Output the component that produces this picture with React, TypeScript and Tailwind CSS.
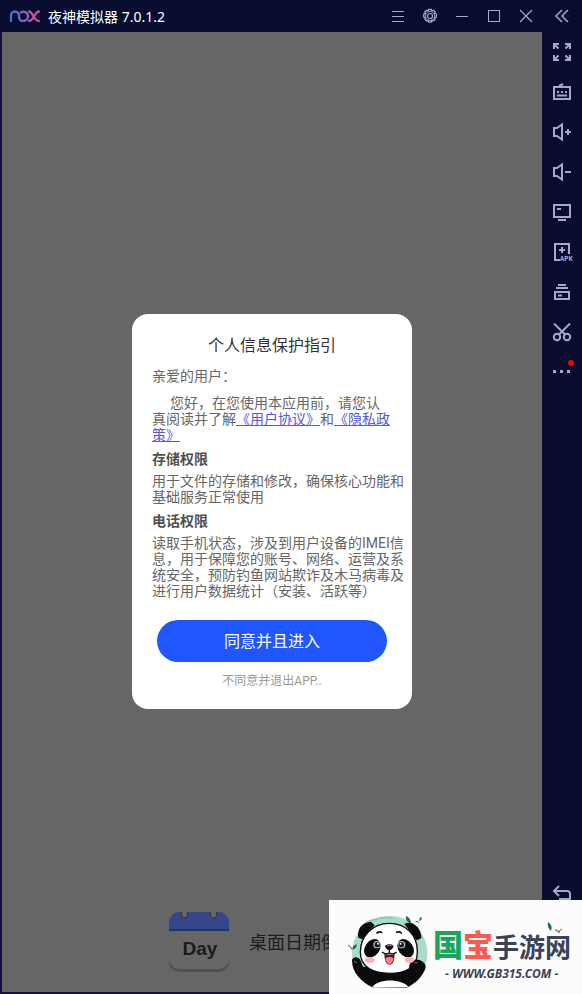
import React from 'react'

type IconProps = {
  children: React.ReactNode
}

const SideIcon = ({ children }: IconProps) => (
  <svg className="h-6 w-6" viewBox="0 0 24 24" fill="none" stroke="currentColor" strokeWidth={2}>
    {children}
  </svg>
)

const TitleIcon = ({ children }: IconProps) => (
  <svg className="h-4 w-4" viewBox="0 0 16 16" fill="none" stroke="currentColor" strokeWidth={1}>
    {children}
  </svg>
)

const titleButtons = [
  { label: '菜单', icon: <path d="M2 3.5h12M2 8.5h12M2 13.5h12" /> },
  {
    label: '设置',
    icon: (
      <>
        <circle cx="8" cy="8" r="2.5" strokeWidth={1.2} />
        <path
          d="M6.700 1.300h2.600l.5 1.700 1.600-.8 1.800 1.800-.8 1.600 1.900.6v2.800l-1.900.6.8 1.600-1.800 1.800-1.600-.8-.5 1.900H6.700l-.5-1.900-1.600.8-1.800-1.800.8-1.600-1.900-.6V6.200l1.900-.6-.8-1.600 1.800-1.800 1.600.8z"
          strokeWidth={1.3}
        />
        <circle cx="8" cy="8" r="4.600" strokeWidth={0.8} />
      </>
    ),
  },
  { label: '最小化', icon: <path d="M2 8.5h12" /> },
  { label: '最大化', icon: <rect x="2.5" y="2.5" width="11" height="11" /> },
  { label: '关闭', icon: <path d="M2 2l12 12M14 2L2 14" strokeWidth={1.2} /> },
]

const sideButtons = [
  {
    label: '全屏',
    icon: <path d="M4 9V4h5M4 4l4.500 4.500M15 4h5v5M20 4l-4.500 4.500M4 15v5h5M4 20l4.500-4.500M20 15v5h-5M20 20l-4.500-4.500" />,
  },
  {
    label: '键盘控制',
    icon: (
      <>
        <rect x="4" y="7" width="16" height="12" />
        <path d="M9 6l4-2M7 12h2M11 12h2M15 12h2M7 15.500h10" />
      </>
    ),
  },
  {
    label: '音量加',
    icon: <path d="M12 4.5v15L7 16H4V8h3zM15 12h6M18 9v6" />,
  },
  {
    label: '音量减',
    icon: <path d="M12 4.5v15L7 16H4V8h3zM15 12h6" />,
  },
  {
    label: '虚拟屏幕',
    icon: (
      <>
        <rect x="4" y="5" width="16" height="12" />
        <path d="M7 9h4M8 20h8" />
      </>
    ),
  },
  {
    label: '安装应用',
    icon: (
      <>
        <path d="M10 20H5V4h14v10M9 10h6M12 7v6" />
        <text x="10" y="21" fontSize="7" fontWeight="700" fontFamily="Liberation Mono, monospace" fill="currentColor" stroke="none">
          APK
        </text>
      </>
    ),
  },
  {
    label: '多开器',
    icon: (
      <>
        <rect x="5" y="12" width="14" height="7" />
        <path d="M6 8h12M8 5h8M8 15.5h4" />
      </>
    ),
  },
  {
    label: '截图',
    icon: (
      <>
        <path d="M4 3.5l11 11M20 3.5l-11 11" />
        <circle cx="7" cy="17" r="3.2" />
        <circle cx="17" cy="17" r="3.2" />
      </>
    ),
  },
  {
    label: '更多',
    icon: (
      <>
        <path d="M3 11.5h3M10 11.5h3M17 11.5h3" strokeWidth={3} />
        <circle cx="21" cy="3" r="3" fill="#f5000f" stroke="none" />
      </>
    ),
  },
]

const NoxLogo = () => (
  <svg className="h-3 w-8" viewBox="0 0 32 12" fill="none" strokeWidth={2.3} strokeLinecap="round">
    <defs>
      <linearGradient id="nox" gradientUnits="userSpaceOnUse" x1="2" y1="0" x2="32" y2="0">
        <stop offset="0" stopColor="#3f74dc" />
        <stop offset="0.5" stopColor="#8f62c8" />
        <stop offset="1" stopColor="#e8468f" />
      </linearGradient>
    </defs>
    <path d="M3 11V5.500a4 4 0 0 1 8 0V7a4 4 0 0 0 4.500 4A4.700 4.700 0 0 0 20 6.300a4.500 4.500 0 0 0-7-3.800" stroke="url(#nox)" />
    <path d="M21 1.500c4 0 4.500 9.500 10 9.500M31 1.500C26.500 1.500 26 11 21 11" stroke="url(#nox)" />
  </svg>
)

const TitleBar = () => (
  <header className="flex h-8 items-center text-[#a3a9cc]">
    <div className="flex flex-1 items-center gap-2 pl-2">
      <NoxLogo />
      <h1 className="whitespace-nowrap pt-0.5 font-['Noto_Sans','Noto_Sans_CJK_SC',sans-serif] text-sm text-white">
        夜神模拟器 7.0.1.2
      </h1>
    </div>
    {titleButtons.map((button) => (
      <button key={button.label} type="button" aria-label={button.label} className="flex h-8 w-8 items-center justify-center hover:text-white">
        <TitleIcon>{button.icon}</TitleIcon>
      </button>
    ))}
    <button type="button" aria-label="收起侧边栏" className="flex h-8 w-10 items-center justify-center hover:text-white">
      <svg className="h-4 w-4" viewBox="0 0 16 16" fill="none" stroke="currentColor" strokeWidth={1.5}>
        <path d="M8 2L2 8l6 6M14 2L8 8l6 6" />
      </svg>
    </button>
  </header>
)

const SideBar = () => (
  <aside className="flex w-10 shrink-0 flex-col items-center justify-between pb-20 text-[#a3a9cc]">
    <div className="flex flex-col">
      {sideButtons.map((button) => (
        <button key={button.label} type="button" aria-label={button.label} className="flex h-10 w-10 items-center justify-center hover:text-white">
          <SideIcon>{button.icon}</SideIcon>
        </button>
      ))}
    </div>
    <button type="button" aria-label="返回" className="flex h-10 w-10 items-center justify-center hover:text-white">
      <SideIcon>
        <path d="M9 4L4 9l5 5M4 9h13a3 3 0 0 1 3 3v5H9" />
      </SideIcon>
    </button>
  </aside>
)

const PrivacyDialog = () => (
  <section
    role="dialog"
    aria-labelledby="dialog-title"
    className="w-[280px] rounded-2xl bg-white pt-5 pb-5 pl-5 pr-2 text-sm leading-4 text-[#666]"
  >
    <h2 id="dialog-title" className="mr-3 text-center text-base leading-6 text-[#333]">个人信息保护指引</h2>
    <p className="mt-2.5">亲爱的用户：</p>
    <p className="mt-[11px] indent-[18px]">
      您好，在您使用本应用前，请您认
      <br />
      真阅读并了解<a href="#agreement" className="text-[#5558dc] underline">《用户协议》</a>和<a href="#privacy" className="text-[#5558dc] underline">《隐私政策》</a>
    </p>
    <h3 className="mt-2 font-bold text-[#505050]">存储权限</h3>
    <p className="mt-1.5">用于文件的存储和修改，确保核心功能和基础服务正常使用</p>
    <h3 className="mt-2 font-bold text-[#505050]">电话权限</h3>
    <p className="mt-1.5">
      读取手机状态，涉及到用户设备的IMEI信息，用于保障您的账号、网络、运营及系统安全，预防钓鱼网站欺诈及木马病毒及进行用户数据统计（安装、活跃等）
    </p>
    <div className="mt-[21px] mr-3 flex flex-col items-center px-[5px]">
      <button type="button" className="h-[42px] w-full rounded-full bg-[#1f56ff] pt-0.5 text-base text-white">
        同意并且进入
      </button>
      <button type="button" className="mt-[11px] text-xs leading-4 text-[#999]">不同意并退出APP..</button>
    </div>
  </section>
)

const AppBrand = () => (
  <div className="flex items-center gap-5">
    <svg className="h-[60px] w-[60px] shrink-0" viewBox="0 0 60 60">
      <rect x="0" y="2" width="60" height="58" rx="10" fill="#505050" />
      <rect x="0" y="0" width="60" height="57" rx="10" fill="#676767" />
      <path d="M0 19V10A10 10 0 0 1 10 0H50A10 10 0 0 1 60 10V19Z" fill="#35478a" />
      <path d="M0 18H60" stroke="#25315e" strokeWidth="2" />
      <path d="M12.500 0v3a3 3 0 0 0 6 0V0M41.500 0v3a3 3 0 0 0 6 0V0" fill="#666" stroke="#333" />
      <text x="31" y="43" textAnchor="middle" fontSize="19" fontWeight="700" fontFamily="Liberation Sans, sans-serif" fill="#1b1b1b">
        Day
      </text>
    </svg>
    <span className="whitespace-nowrap pt-0.5 text-lg text-[#1c1c1c]">桌面日期倒计时</span>
  </div>
)

const Panda = () => (
  <svg className="h-[94px] w-[110px] shrink-0" viewBox="0 0 330 282">
    <path d="M130 261A113 113 0 1 1 234 261Z" fill="#a8dcc8" />
    <path d="M110 68q35-18 80-14" stroke="#82c9ad" strokeWidth="5" fill="none" />
    {/* ears */}
    <path d="M88 113C84 88 96 68 126 65L137 76L100 118Z" fill="#0b0b0d" />
    <path d="M226 72C248 58 278 82 277 115L263 121Z" fill="#0b0b0d" />
    {/* body and raised arms */}
    <path d="M69 180C73 168 88 170 94 180L102 200L246 208C236 190 250 174 270 180C289 186 294 200 287 211C274 238 256 252 234 263L130 262C99 246 68 219 69 180Z" fill="#0b0b0d" />
    <path d="M130 262C145 235 221 235 239 262Z" fill="#fff" />
    {/* face */}
    <path d="M181 70C232 70 265 105 265 155C265 205 225 220 181 220C135 220 94 203 94 157C94 106 132 70 181 70Z" fill="#fff" stroke="#0b0b0d" strokeWidth="4" />
    <path d="M242 208C236 192 249 179 265 180C282 181 293 194 286 210L265 222Z" fill="#0b0b0d" />
    <path d="M144 99q8-6 14-2M203 97q8-4 14 2" stroke="#111" strokeWidth="5" fill="none" strokeLinecap="round" />
    <ellipse cx="130" cy="145" rx="22" ry="30" transform="rotate(35 130 145)" fill="#08090b" />
    <ellipse cx="230" cy="145" rx="22" ry="30" transform="rotate(-35 230 145)" fill="#08090b" />
    <circle cx="144" cy="134" r="11" fill="#b9c0c2" />
    <circle cx="218" cy="134" r="11" fill="#b9c0c2" />
    <circle cx="145" cy="134" r="8" fill="#111820" />
    <circle cx="217" cy="134" r="8" fill="#111820" />
    <circle cx="147" cy="131" r="3" fill="#fff" />
    <circle cx="215" cy="131" r="3" fill="#fff" />
    <path d="M168 137q13-8 26 0q-2 12-13 13q-11-1-13-13Z" fill="#111" />
    <path d="M173 138q8-4 15 0" stroke="#9d6a7c" strokeWidth="4" />
    <path d="M160 157q12 9 21 1q10 8 21-1M181 149v9" stroke="#111" strokeWidth="4" fill="none" strokeLinecap="round" />
    <path d="M166 161q15 5 31 0q0 32-15 34q-16-2-16-34Z" fill="#5a1820" />
    <path d="M169 175q13-10 25 0q-4 18-12 19q-10-1-13-19Z" fill="#f47f83" />
    <ellipse cx="122" cy="180" rx="15" ry="9" fill="#ffb2b5" />
    <ellipse cx="241" cy="180" rx="14" ry="9" fill="#ffb2b5" />
    <path d="M75 184l9 4M256 188l10 0" stroke="#75777c" strokeWidth="3" />
    {/* bamboo leaves */}
    <path d="M230 48q16 5 16 23q-16-5-16-23ZM70 149q0-13 14-16q-1 15-14 16ZM271 64q-1-11 6-14q3 9-6 14Z" fill="#187052" />
    <path d="M57 135q9 3 11 13M260 64q8-1 9 5" stroke="#2d6855" strokeWidth="3" fill="none" />
  </svg>
)

const SiteBadge = () => (
  <div className="absolute right-0 bottom-0 flex h-[94px] w-[253px] bg-[#fcfcfc]">
    <Panda />
    <div className="-ml-2 flex flex-col pt-7">
      <div className="flex items-center pl-0.5 whitespace-nowrap font-bold leading-8">
        <span className="text-3xl leading-8 font-black text-[#18a65d]">国</span>
        <span className="text-3xl leading-8 font-black text-[#ff5a50]">宝</span>
        <span className="pt-1 text-[26px] leading-8 text-[#3b4356]">手游网</span>
      </div>
      <span className="pl-3.5 whitespace-nowrap font-['Noto_Sans',sans-serif] text-xs leading-5 font-bold text-[#3b4356] italic">
        - WWW.GB315.COM -
      </span>
    </div>
    <svg className="absolute top-5 right-4 h-5 w-5" viewBox="0 0 20 20" fill="none">
      <path d="M2 2q5 3 3 9q-4-3-3-9Z" fill="#187052" />
      <path d="M9 10q3 0 4 3q0-3 3-4" stroke="#7d958d" strokeWidth="1.300" />
    </svg>
  </div>
)

export default function App() {
  return (
    <div className="relative flex min-h-screen flex-col bg-[#080d2f] font-[Roboto,'Noto_Sans_CJK_SC',sans-serif]">
      <TitleBar />
      <div className="flex flex-1">
        <main className="flex flex-1 flex-col items-center border-b-2 border-l-2 border-[#150f42] bg-[#666]">
          <div className="flex flex-1 flex-col items-center justify-center pt-[98px]">
            <PrivacyDialog />
          </div>
          <div className="pt-5 pb-5">
            <AppBrand />
          </div>
        </main>
        <SideBar />
      </div>
      <SiteBadge />
    </div>
  )
}
